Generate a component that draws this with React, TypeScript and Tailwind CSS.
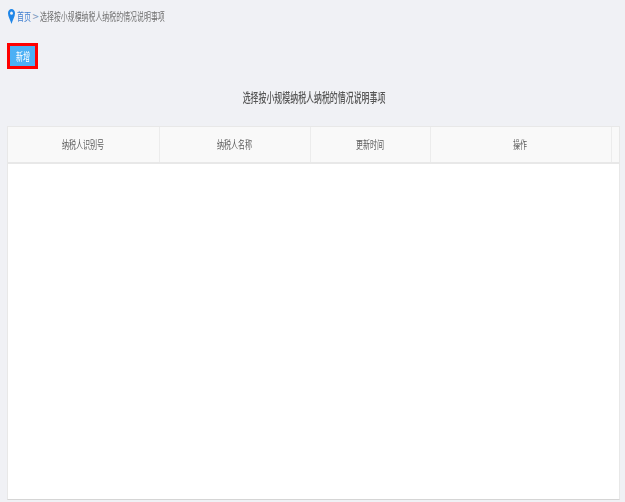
const font = { fontFamily: '"Noto Sans CJK SC", "Liberation Sans", sans-serif' };

const columns = [
  { label: "纳税人识别号", width: "w-[152px]" },
  { label: "纳税人名称", width: "w-[151px]" },
  { label: "更新时间", width: "w-[120px]" },
  { label: "操作", width: "w-[181px]" },
];

export default function App() {
  return (
    <div style={font} className="w-[625px] h-[502px] bg-[#f0f1f5] overflow-hidden flex flex-col">
      <div className="h-[43px] pl-[8px] pt-[9px] flex items-start text-[11px] leading-[15px] shrink-0">
        <svg width="7" height="15" viewBox="0 0 8 15" preserveAspectRatio="none" className="mr-[2px] shrink-0">
          <path d="M4 0C1.8 0 0 1.9 0 4.3 0 7.4 2.6 10.8 4 15c1.4-4.2 4-7.6 4-10.7C8 1.9 6.2 0 4 0z" fill="#1f86e8" />
          <circle cx="4" cy="4.2" r="1.6" fill="#f0f1f5" />
        </svg>
        <span className="w-[14px] whitespace-nowrap origin-left scale-x-[0.64] blur-[0.3px] text-[#3f7fd0]">首页</span>
        <span className="w-[9px] text-center text-[#7f9bc0]">&gt;</span>
        <span className="whitespace-nowrap origin-left scale-x-[0.63] blur-[0.3px] text-[#6f6f6f]">
          选择按小规模纳税人纳税的情况说明事项
        </span>
      </div>
      <div className="pl-[7px] h-[26px] shrink-0">
        <div className="w-[31px] h-[26px] border-[3px] border-[#ff0000] flex items-center justify-center">
          <button className="w-[25px] h-[20px] bg-[#4cb0f5] flex items-center justify-center">
            <span className="text-white text-[11px] whitespace-nowrap scale-x-[0.64] blur-[0.3px]">新增</span>
          </button>
        </div>
      </div>
      <h1 className="flex justify-center h-[20px] mt-[18px] pl-[3px] text-[#555] text-[13px] leading-[20px] font-medium shrink-0">
        <span className="whitespace-nowrap scale-x-[0.61] blur-[0.3px]">选择按小规模纳税人纳税的情况说明事项</span>
      </h1>
      <div className="mt-[19px] ml-[7px] w-[613px] h-[374px] bg-white border border-[#e8e8e8] border-b-[#d5d5d5] flex flex-col shrink-0">
        <div className="h-[37px] bg-[#f9f9f9] border-b-2 border-[#e8e8e8] flex shrink-0">
          {columns.map((c) => (
            <div
              key={c.label}
              className={`${c.width} border-r border-[#ececec] pr-[2px] flex items-center justify-center text-[11px] text-[#5c5c5c]`}
            >
              <span className="whitespace-nowrap scale-x-[0.64] blur-[0.3px]">{c.label}</span>
            </div>
          ))}
        </div>
      </div>
    </div>
  );
}
